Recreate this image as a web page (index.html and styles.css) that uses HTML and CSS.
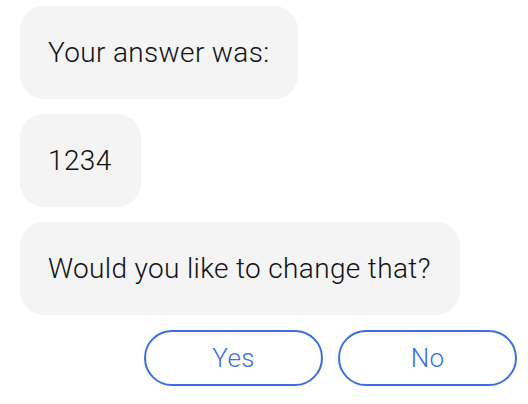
FILE: index.html
```html
<!DOCTYPE html>
<html>
<head>
<meta charset="utf-8">
<link rel="stylesheet" href="styles.css">
</head>
<body>
<div class="chat">
  <div class="bubble">Your answer was:</div>
  <div class="bubble">1234</div>
  <div class="bubble">Would you like to change that?</div>
  <div class="actions">
    <button class="btn">Yes</button>
    <button class="btn">No</button>
  </div>
</div>
</body>
</html>
```
FILE: styles.css
```css
html, body {
  margin: 0;
  padding: 0;
  background: #ffffff;
}
.chat {
  display: flex;
  flex-direction: column;
  align-items: flex-start;
  gap: 15px;
  padding: 6px 11px 0 20px;
  font-family: Roboto, "Liberation Sans", sans-serif;
}
.bubble {
  background: #f4f4f4;
  border-radius: 24px;
  padding: 0 29px 0 28px;
  height: 93px;
  display: flex;
  align-items: center;
  font-size: 28px;
  font-weight: 300;
  letter-spacing: 0.35px;
  color: #111111;
  box-sizing: border-box;
}
.actions {
  align-self: flex-end;
  display: flex;
  gap: 15px;
}
.btn {
  width: 179px;
  height: 56px;
  border: 2px solid #3d6ee9;
  border-radius: 28px;
  background: #ffffff;
  color: #3d6ee9;
  font-family: Roboto, "Liberation Sans", sans-serif;
  font-size: 26px;
  font-weight: 300;
  letter-spacing: 0.35px;
  box-sizing: border-box;
  padding: 0;
}
```
